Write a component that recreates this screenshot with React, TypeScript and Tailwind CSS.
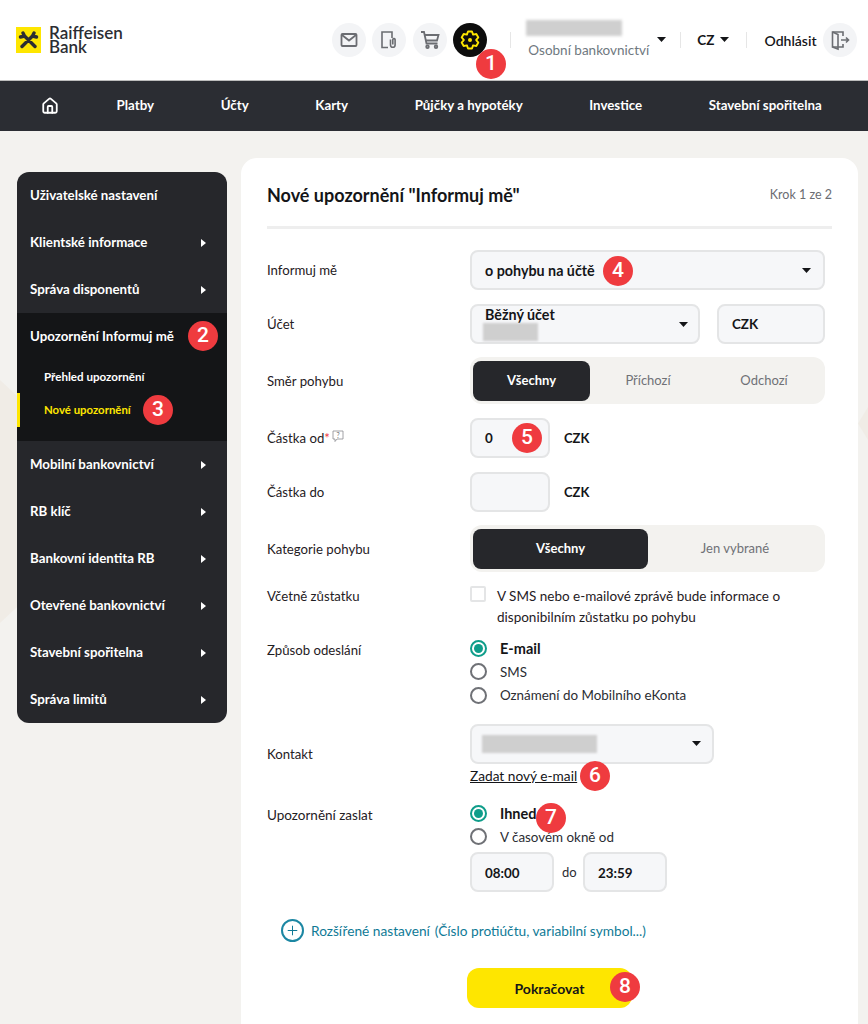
import { House, Plus } from "lucide-react";
import type { ReactNode } from "react";

const font = "font-['Lato','Noto_Sans',sans-serif]";

const navItems = ["Platby", "Účty", "Karty", "Půjčky a hypotéky", "Investice", "Stavební spořitelna"];

const sideTop = [
  { label: "Uživatelské nastavení", arrow: false },
  { label: "Klientské informace", arrow: true },
  { label: "Správa disponentů", arrow: true },
];

const sideBottom = [
  "Mobilní bankovnictví",
  "RB klíč",
  "Bankovní identita RB",
  "Otevřené bankovnictví",
  "Stavební spořitelna",
  "Správa limitů",
];

function Caret({ className = "" }: { className?: string }) {
  return (
    <svg width="9" height="5" viewBox="0 0 9 5" className={className}>
      <path d="M0 0h9L4.500 5z" fill="currentColor" />
    </svg>
  );
}

function SideArrow() {
  return (
    <svg width="5" height="8" viewBox="0 0 5 8">
      <path d="M0 0l5 4-5 4z" fill="#fff" />
    </svg>
  );
}

function Logo() {
  return (
    <div className="flex items-center gap-2">
      <div className="flex h-[26px] w-[25px] items-center justify-center bg-[#fee600]">
        <svg width="21" height="19" viewBox="0 0 21 19">
          <path
            d="M4 15.500L14.500 5M17 15.500L6.500 5M6.500 5L2.500 6M6.500 5L5 2M14.500 5L18.500 6M14.500 5L16 2"
            stroke="#2b2d33"
            strokeWidth="3.400"
            strokeLinecap="round"
            fill="none"
          />
        </svg>
      </div>
      <div className="text-[17px] font-semibold leading-[14px] text-[#2b2d33]">
        Raiffeisen
        <br />
        Bank
      </div>
    </div>
  );
}

function RoundIcon({ children, dark = false }: { children: ReactNode; dark?: boolean }) {
  return (
    <div
      className={
        dark
          ? "flex h-[34px] w-[34px] items-center justify-center rounded-full bg-[#0d0d0d]"
          : "flex h-[34px] w-[34px] items-center justify-center rounded-full bg-[#f3f4f6]"
      }
    >
      {children}
    </div>
  );
}

function Badge({ n, className }: { n: number; className: string }) {
  return (
    <div
      className={`absolute flex h-[30px] w-[30px] items-center justify-center rounded-full bg-[#ef3b3f] font-['Roboto',sans-serif] text-[21px] font-medium text-white ${className}`}
    >
      {n}
    </div>
  );
}

function Field({ children, className = "" }: { children?: ReactNode; className?: string }) {
  return (
    <div
      className={`flex h-10 items-center rounded-lg border-2 border-[#e4e5e6] bg-[#f6f7f9] px-[13px] text-[13.4px] font-bold text-[#141518] ${className}`}
    >
      {children}
    </div>
  );
}

function Segmented({ options, firstWidth }: { options: string[]; firstWidth: string }) {
  return (
    <div className="flex h-[47px] items-center rounded-xl bg-[#f3f2ef] px-[3px]">
      <div
        className={`flex h-10 items-center justify-center rounded-lg bg-[#26272b] pt-px text-[13px] font-bold text-white ${firstWidth}`}
      >
        {options[0]}
      </div>
      {options.slice(1).map((o) => (
        <div key={o} className="flex flex-1 items-center justify-center pt-px text-[13px] text-[#6f7176]">
          {o}
        </div>
      ))}
    </div>
  );
}

function Radio({ label, on = false }: { label: string; on?: boolean }) {
  return (
    <div className="flex h-[23.3px] items-center">
      {on ? (
        <div className="flex h-[17px] w-[17px] items-center justify-center rounded-full border-2 border-[#0f9d8a]">
          <div className="h-[9px] w-[9px] rounded-full bg-[#0f9d8a]" />
        </div>
      ) : (
        <div className="h-[17px] w-[17px] rounded-full border-2 border-[#6f7176]" />
      )}
      <span
        className={
          on
            ? "ml-[13px] text-[14.5px] font-bold text-[#141518]"
            : "ml-[13px] text-[13.4px] text-[#2b2d33]"
        }
      >
        {label}
      </span>
    </div>
  );
}

function Row({
  label,
  children,
  className = "",
  labelClass = "self-center pt-[2px]",
}: {
  label: ReactNode;
  children: ReactNode;
  className?: string;
  labelClass?: string;
}) {
  return (
    <div className={`grid grid-cols-[203px_355px] ${className}`}>
      <div className={`text-[13.2px] text-[#1f2024] ${labelClass}`}>{label}</div>
      <div>{children}</div>
    </div>
  );
}

// six lobed cog, same shape as the bank's settings icon
const cogPoints = Array.from({ length: 6 })
  .flatMap((_, i) => {
    const a = ((i * 60 - 90) * Math.PI) / 180;
    const p = (r: number, d: number) =>
      `${(10 + r * Math.cos(a + d)).toFixed(2)},${(10 + r * Math.sin(a + d)).toFixed(2)}`;
    return [p(6.200, -0.520), p(8.700, -0.230), p(8.700, 0.230), p(6.200, 0.520)];
  })
  .join(" ");

export default function App() {
  return (
    <div className={`relative h-[1024px] overflow-hidden bg-[#f3f2ef] ${font}`}>
      {/* background shapes */}
      <div className="absolute left-0 top-[380px] h-[243px] w-[130px] bg-[#f0ece6] [clip-path:polygon(0_0,100%_50%,0_100%)]" />
      <div className="absolute right-0 top-[407px] h-[33px] w-[10px] bg-[#f0ece6] [clip-path:polygon(100%_0,0_50%,100%_100%)]" />

      {/* Header */}
      <header className="relative flex h-[81px] items-center border-b border-[#bdbdbd] bg-white pl-4">
        <Logo />
        <div className="ml-[209px] flex gap-[6.500px]">
          <RoundIcon>
            <svg width="20" height="20" viewBox="0 0 20 20" fill="none" stroke="#6b6d72" strokeWidth="1.800">
              <rect x="2.500" y="4" width="15" height="12" rx="1" />
              <path d="M3 5l7 5.500L17 5" />
            </svg>
          </RoundIcon>
          <RoundIcon>
            <svg width="22" height="22" viewBox="0 0 22 22" fill="none" stroke="#6b6d72" strokeWidth="1.600">
              <path d="M10 18.500H4V3h10v6" />
              <path d="M12.500 10.500v5.500a2.300 2.300 0 0 0 4.600 0V10.500a1.200 1.200 0 0 0 -2.300 0V15.500" />
            </svg>
          </RoundIcon>
          <RoundIcon>
            <svg width="22" height="22" viewBox="0 0 22 22" fill="none" stroke="#6b6d72" strokeWidth="1.800">
              <path d="M2 3h3l2.500 11.500h11" />
              <path d="M5.700 6H19.500l-1.500 5.500H7" />
              <circle cx="8.500" cy="17.800" r="1.300" />
              <circle cx="17" cy="17.800" r="1.300" />
            </svg>
          </RoundIcon>
          <RoundIcon dark>
            <svg width="20" height="20" viewBox="0 0 20 20" fill="none">
              <polygon points={cogPoints} stroke="#fee600" strokeWidth="1.900" strokeLinejoin="round" />
              <circle cx="10" cy="10" r="2" fill="#fee600" />
            </svg>
          </RoundIcon>
        </div>
        <div className="ml-[23px] h-4 w-px bg-[#e6e6e6]" />
        <div className="ml-[15px] w-[122px]">
          <div className="h-4 w-[96px] bg-[#cfcfcf] blur-[1.500px]" />
          <div className="ml-[2px] mt-[4px] whitespace-nowrap text-[13.5px] text-[#6f7880]">Osobní bankovnictví</div>
        </div>
        <Caret className="mb-[2px] ml-[9px] text-[#141518]" />
        <div className="ml-[14px] h-4 w-px bg-[#e6e6e6]" />
        <span className="ml-[16px] text-[13.500px] font-bold text-[#141518]">CZ</span>
        <Caret className="mb-[2px] ml-[6px] text-[#141518]" />
        <div className="ml-[17px] h-4 w-px bg-[#e6e6e6]" />
        <span className="ml-[17px] w-[52px] whitespace-nowrap text-[14px] font-semibold text-[#141518]">Odhlásit</span>
        <div className="ml-[7px]">
          <RoundIcon>
            <svg width="22" height="22" viewBox="0 0 22 22" fill="none" stroke="#6b6d72" strokeWidth="1.600">
              <path d="M14 7V3H3.500v15H14v-3" />
              <path d="M3.500 3l5.500 2.500V20l-5.500-2" />
              <path d="M12 11h7.500M17 8.500l2.500 2.500L17 13.500" />
            </svg>
          </RoundIcon>
        </div>
      </header>

      {/* Main nav */}
      <nav className="flex h-[50px] items-center bg-[#2b2d33] pl-[41px] text-[13.3px] font-bold text-white">
        <House size={18} strokeWidth={2.400} className="mr-[-9px]" />
        {navItems.map((item) => (
          <span key={item} className="ml-[66.6px] whitespace-nowrap">
            {item}
          </span>
        ))}
      </nav>

      <div className="relative flex items-start pl-[17px] pt-[27px]">
        {/* Sidebar */}
        <aside className="mt-[14px] w-[210px] overflow-hidden rounded-xl bg-[#26272b] text-[13.3px] font-bold text-white">
          {sideTop.map((s) => (
            <div key={s.label} className="flex h-[47px] items-center justify-between pl-[13px] pr-[21px]">
              <span>{s.label}</span>
              {s.arrow && <SideArrow />}
            </div>
          ))}
          <div className="h-[128px] bg-[#141517]">
            <div className="flex h-[47px] items-center pl-[13px]">Upozornění Informuj mě</div>
            <div className="flex h-[33px] items-center pl-[27px] text-[11.600px]">Přehled upozornění</div>
            <div className="flex h-[34px] items-center border-l-[3px] border-[#fee600] pl-[24px] text-[11.400px] text-[#fee600]">
              Nové upozornění
            </div>
          </div>
          {sideBottom.map((s) => (
            <div key={s} className="flex h-[47px] items-center justify-between pl-[13px] pr-[21px]">
              <span>{s}</span>
              <SideArrow />
            </div>
          ))}
        </aside>

        {/* Form card */}
        <main className="ml-[14px] h-[866px] w-[617px] rounded-t-2xl bg-white px-[26px] pt-[26px]">
          <div className="flex h-[22px] items-center justify-between">
            <h1 className="text-[18px] font-bold text-[#141518]">Nové upozornění "Informuj mě"</h1>
            <span className="text-[12.500px] text-[#6b6d72]">Krok 1 ze 2</span>
          </div>
          <div className="mt-5 h-[3px] bg-[#eeeeee]" />

          <Row label="Informuj mě" className="mt-[21px]">
            <Field className="justify-between pr-[12px]">
              <span className="pt-[2px] text-[14.3px]">o pohybu na účtě</span>
              <Caret />
            </Field>
          </Row>

          <Row label="Účet" className="mt-[14px]">
            <div className="flex gap-[17px]">
              <Field className="w-[230px] justify-between pr-[10px]">
                <div className="text-[14.3px] leading-[14px]">
                  <div>Běžný účet</div>
                  <div className="ml-[-2px] mt-[1px] h-[18px] w-[55px] bg-[#cfcfcf] blur-[1px]" />
                </div>
                <Caret />
              </Field>
              <Field className="w-[108px] pt-px">CZK</Field>
            </div>
          </Row>

          <Row label="Směr pohybu" className="mt-[13px]">
            <Segmented options={["Všechny", "Příchozí", "Odchozí"]} firstWidth="w-[117px]" />
          </Row>

          <Row
            label={
              <span className="flex items-center">
                Částka od<span className="text-[#ef3b3f]">*</span>
                <svg width="12" height="13" viewBox="0 0 12 13" fill="none" className="mb-[4px] ml-[2px]">
                  <path d="M1 1h10v8H5l-2 2.500V9H1z" stroke="#8a8c90" strokeWidth="0.800" />
                  <text x="6" y="7.500" textAnchor="middle" fontSize="7" fill="#6b6d72">
                    ?
                  </text>
                </svg>
              </span>
            }
            className="mt-[14px]"
          >
            <div className="flex items-center">
              <Field className="w-20 pt-px">0</Field>
              <span className="ml-[14px] pt-px text-[13px] font-bold text-[#141518]">CZK</span>
            </div>
          </Row>

          <Row label="Částka do" className="mt-[14px]">
            <div className="flex items-center">
              <Field className="w-20" />
              <span className="ml-[14px] pt-px text-[13px] font-bold text-[#141518]">CZK</span>
            </div>
          </Row>

          <Row label="Kategorie pohybu" className="mt-[13px]">
            <Segmented options={["Všechny", "Jen vybrané"]} firstWidth="w-[175px]" />
          </Row>

          <Row label="Včetně zůstatku" className="mt-[14px] leading-[21px]" labelClass="">
            <div className="flex">
              <div className="h-4 w-4 shrink-0 rounded-[2px] border-2 border-[#e4e5e6] bg-white" />
              <p className="ml-[11px] w-[320px] text-[13.500px] leading-[21px] text-[#1f2024]">
                V SMS nebo e-mailové zprávě bude informace o disponibilním zůstatku po pohybu
              </p>
            </div>
          </Row>

          <Row label="Způsob odeslání" className="mt-[9px]" labelClass="pt-[4px]">
            <Radio label="E-mail" on />
            <Radio label="SMS" />
            <Radio label="Oznámení do Mobilního eKonta" />
          </Row>

          <Row label="Kontakt" className="mt-[17px]">
            <Field className="w-[244px] justify-between pr-[11px]">
              <div className="ml-[-3px] h-[18px] w-[115px] bg-[#cfcfcf] blur-[1px]" />
              <Caret />
            </Field>
            <a className="mt-[2px] block text-[13.700px] leading-[19px] text-[#141518] underline">Zadat nový e-mail</a>
          </Row>

          <Row label="Upozornění zaslat" className="mt-[17px]" labelClass="pt-[3px] text-[13.500px]">
            <Radio label="Ihned" on />
            <Radio label="V časovém okně od" />
            <div className="mt-[4px] flex items-center">
              <Field className="w-[84px] pt-px">08:00</Field>
              <span className="mx-2 w-[13px] text-[13px] text-[#2b2d33]">do</span>
              <Field className="w-[84px] pt-px">23:59</Field>
            </div>
          </Row>

          <div className="ml-[14px] mt-[27px] flex items-center text-[13.700px] text-[#0f7a96]">
            <div className="flex h-[23px] w-[23px] items-center justify-center rounded-full border-2 border-[#1c87a3]">
              <Plus size={15} strokeWidth={1.600} />
            </div>
            <span className="ml-[7px]">Rozšířené nastavení</span>
            <span className="ml-[5px]">(Číslo protiúčtu, variabilní symbol...)</span>
          </div>

          <button className="ml-[200px] mt-[26px] flex h-10 w-[165px] items-center justify-center rounded-xl bg-[#fee600] text-[14px] font-bold text-[#141518]">
            Pokračovat
          </button>
        </main>
      </div>

      {/* numbered annotations */}
      <Badge n={1} className="left-[476px] top-[49px]" />
      <Badge n={2} className="left-[188px] top-[321px]" />
      <Badge n={3} className="left-[143px] top-[395px]" />
      <Badge n={4} className="left-[603px] top-[256px]" />
      <Badge n={5} className="left-[512px] top-[423px]" />
      <Badge n={6} className="left-[580px] top-[761px]" />
      <Badge n={7} className="left-[536px] top-[803px]" />
      <Badge n={8} className="left-[610px] top-[972px]" />
    </div>
  );
}
